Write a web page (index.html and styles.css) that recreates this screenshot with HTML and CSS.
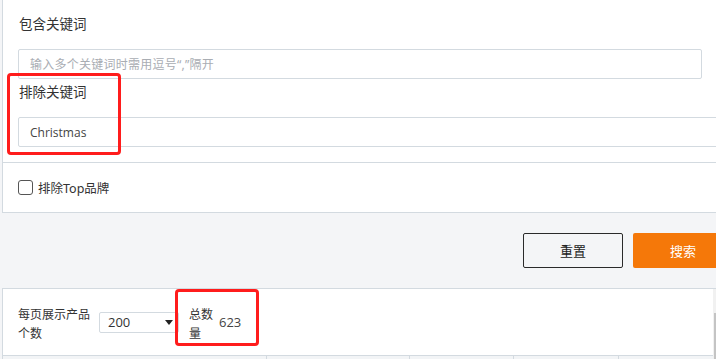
FILE: index.html
```html
<!DOCTYPE html>
<html lang="zh">
<head>
<meta charset="utf-8">
<link rel="stylesheet" href="styles.css">
</head>
<body>
<div class="page">
  <section class="filter">
    <div class="fields">
      <div class="label">包含关键词</div>
      <div class="input input-1"><span class="placeholder">输入多个关键词时需用逗号“,”隔开</span></div>
      <div class="label label-2">排除关键词</div>
      <div class="input input-2"><span class="value">Christmas</span></div>
    </div>
    <div class="check-row">
      <span class="checkbox"></span>
      <span class="check-label">排除Top品牌</span>
    </div>
  </section>

  <div class="actions">
    <button class="btn btn-reset">重置</button>
    <button class="btn btn-search">搜索</button>
  </div>

  <div class="results-wrap">
    <section class="results">
      <div class="toolbar">
        <div class="per-page">每页展示产品个数</div>
        <div class="select"><span>200</span><span class="caret"></span></div>
        <div class="total-label">总数量</div>
        <div class="total-value">623</div>
      </div>
      <div class="thead">
        <div class="th c1"></div>
        <div class="th c2"></div>
        <div class="th c3"></div>
        <div class="th c4"></div>
        <div class="th c5"></div>
      </div>
    </section>
    <div class="scrollbar"><div class="thumb"></div></div>
  </div>
</div>
<div class="mark mark-1"></div>
<div class="mark mark-2"></div>
</body>
</html>
```

FILE: styles.css
```css
html, body {
  margin: 0;
  padding: 0;
}
body {
  background: #f4f5f7;
  font-family: "Noto Sans CJK SC", "Noto Sans", sans-serif;
  color: #333;
  width: 716px;
  height: 359px;
  overflow: hidden;
  position: relative;
}
.page {
  padding-left: 2px;
}
.filter {
  background: #fff;
  border-left: 1px solid #d3dae0;
  border-bottom: 1px solid #d3dae0;
  width: 760px;
}
.fields {
  padding: 13px 0 15px 15px;
  border-bottom: 1px solid #d3dae0;
}
.label {
  font-size: 13.5px;
  line-height: 20px;
  height: 20px;
  padding-left: 1px;
  color: #333;
}
.label-2 {
  margin-top: 2px;
}
.input {
  box-sizing: border-box;
  height: 30px;
  border: 1px solid #d3dae0;
  border-radius: 2px;
  margin-top: 16px;
  display: flex;
  align-items: center;
  padding-left: 11px;
}
.input-1 {
  width: 684px;
}
.input-2 {
  width: 740px;
}
.placeholder {
  font-family: "Noto Sans", "Noto Sans CJK SC", sans-serif;
  font-size: 12px;
  letter-spacing: 0.25px;
  color: #a9adb3;
}
.value {
  font-family: "Open Sans", "Noto Sans", sans-serif;
  font-size: 12px;
  color: #444;
}
.check-row {
  display: flex;
  align-items: center;
  height: 49px;
  padding-left: 15px;
}
.checkbox {
  box-sizing: border-box;
  width: 15px;
  height: 15px;
  border: 1.5px solid #555;
  border-radius: 3px;
  margin-right: 5px;
}
.check-label {
  font-family: "Noto Sans", "Noto Sans CJK SC", sans-serif;
  font-size: 12.5px;
  color: #333;
}
.actions {
  display: flex;
  justify-content: flex-end;
  gap: 10px;
  padding: 20px 0;
  margin-right: -17px;
}
.btn {
  width: 100px;
  height: 35px;
  box-sizing: border-box;
  border-radius: 2px;
  font-family: "Noto Sans CJK SC", sans-serif;
  font-size: 13px;
  padding: 0;
}
.btn-reset {
  background: transparent;
  border: 1px solid #2a2a2a;
  color: #222;
}
.btn-search {
  background: #f57809;
  border: none;
  color: #fff;
}
.results-wrap {
  display: flex;
}
.results {
  flex: 1;
  background: #fff;
  border-top: 1px solid #d3dae0;
  border-left: 1px solid #d3dae0;
}
.scrollbar {
  width: 3px;
  background: #f1f1f1;
  border-top: 1px solid #d3dae0;
}
.thumb {
  margin-top: 24px;
  width: 2px;
  margin-left: 1px;
  height: 60px;
  background: #c4c4c4;
}
.toolbar {
  display: flex;
  align-items: center;
  height: 66px;
  padding-left: 15px;
  font-size: 12px;
  color: #333;
}
.per-page {
  width: 76px;
  line-height: 19px;
  margin-top: 1px;
}
.select {
  box-sizing: border-box;
  width: 80px;
  height: 21px;
  margin-left: 5px;
  border: 1px solid #d3dae0;
  border-radius: 2px;
  display: flex;
  align-items: center;
  justify-content: space-between;
  padding: 0 5px 0 8px;
  font-family: "Open Sans", "Noto Sans", sans-serif;
  font-size: 13px;
  color: #333;
}
.caret {
  width: 0;
  height: 0;
  border-left: 4px solid transparent;
  border-right: 4px solid transparent;
  border-top: 5px solid #222;
}
.total-label {
  width: 26px;
  margin-left: 10px;
  line-height: 19px;
  margin-top: 1px;
}
.total-value {
  margin-left: 4px;
  font-family: "Open Sans", "Noto Sans", sans-serif;
  font-size: 13px;
  color: #444;
}
.thead {
  display: flex;
  height: 10px;
  border-top: 1px solid #d3dae0;
  background: #f2f4f6;
}
.th {
  border-right: 1px solid #d3dae0;
}
.c1 { width: 263px; }
.c2 { width: 142px; }
.c3 { width: 103px; }
.c4 { width: 104px; }
.c5 { flex: 1; border-right: none; }
.mark {
  position: absolute;
  border: 3px solid #ff1c1c;
  border-radius: 4px;
  box-sizing: border-box;
}
.mark-1 {
  left: 7px;
  top: 73px;
  width: 114px;
  height: 82px;
}
.mark-2 {
  left: 175px;
  top: 289px;
  width: 84px;
  height: 57px;
}
```
